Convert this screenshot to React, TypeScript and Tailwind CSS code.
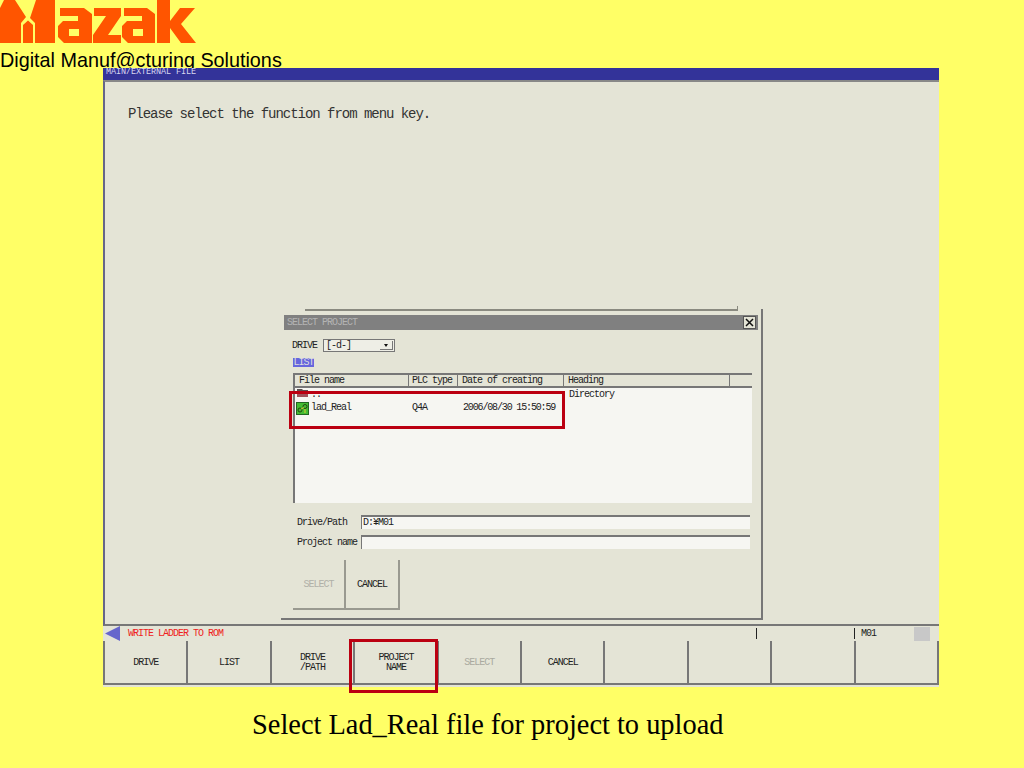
const MENU_KEYS = [
  ["DRIVE"],
  ["LIST"],
  ["DRIVE", "/PATH"],
  ["PROJECT", "NAME"],
  ["SELECT"],
  ["CANCEL"],
  [],
  [],
  [],
  [],
];

function MazakLogo() {
  return (
    <svg width="200" height="44" viewBox="0 0 200 44" className="block" fill="#ff5500">
      <path d="M0 43V8L4 0H15L26 17L21 23V43Z" />
      <path d="M23 43V25L28 20.5L33 25V43Z" />
      <path d="M35 43V23L30 18L36 0H55V43Z" />
      <path
        fillRule="evenodd"
        d="M60 8H84L92 14V43H64L58 37V26L63 21H78V16H60ZM69 29H79V36H69Z"
      />
      <path d="M94 8H121V16L108 35H121V43H93V35L106 16H94Z" />
      <path
        fillRule="evenodd"
        d="M124 8H147L155 14V43H128L122 37V26L127 21H142V16H124ZM133 29H143V36H133Z"
      />
      <path d="M157 0H170V21L180 8H195L181 24L196 43H181L170 28V43H157Z" />
    </svg>
  );
}

function FileTable() {
  return (
    <div className="ml-[12px] mt-[6px] h-[130px] w-[459px] border-l-2 border-[#777777] bg-[#f6f6f2] text-[#222222]">
      <div className="flex h-[15px] border-y-2 border-[#777777] bg-[#e4e4d6] leading-[11px]">
        <div className="w-[114px] border-r border-[#777777] pl-[4px]">File name</div>
        <div className="w-[49px] border-r border-[#777777] pl-[3px]">PLC type</div>
        <div className="w-[106px] border-r border-[#777777] pl-[4px]">Date of creating</div>
        <div className="w-[166px] border-r border-[#777777] pl-[4px]">Heading</div>
      </div>
      <div className="flex h-[12px] leading-[13px]">
        <div className="flex w-[114px] items-center gap-[2px] pl-[1px]">
          <svg width="13" height="8" viewBox="0 0 13 8" className="-mt-[3px]">
            <path d="M1 0H6L7 1H12V8H1Z" fill="#5a5050" />
            <rect x="1" y="4" width="11" height="4" fill="#a0525a" />
          </svg>
          <span>..</span>
        </div>
        <div className="w-[155px]" />
        <div className="pl-[5px]">Directory</div>
      </div>
      <div className="mt-[1px] flex h-[14px] leading-[14px]">
        <div className="flex w-[114px] items-center gap-[2px] pl-[1px]">
          <svg width="13" height="13" viewBox="0 0 13 13">
            <rect x="0.5" y="0.5" width="12" height="12" fill="#44bb33" stroke="#226622" />
            <circle cx="4" cy="8" r="2" fill="none" stroke="#224411" />
            <circle cx="9" cy="4.5" r="2" fill="none" stroke="#224411" />
            <path d="M5 7L8 5.5M9 7V11" stroke="#ddcc33" />
          </svg>
          <span>lad_Real</span>
        </div>
        <div className="w-[52px] pl-[3px]">Q4A</div>
        <div className="w-[103px] pl-[2px] tracking-[-1.15px]">2006/08/30 15:50:59</div>
      </div>
    </div>
  );
}

function SelectProjectDialog() {
  return (
    <div className="absolute left-[176px] top-[227px] h-[311px] w-[482px] border-r-2 border-b-2 border-[#777777] bg-[#e4e4d6] text-[#222222]">
      <div className="ml-[24px] mr-[24px] flex h-[1px] items-start justify-between border-t-2 border-[#8a8a80]">
        <span className="-mt-[5px] -mr-[1px] ml-auto h-[5px] w-[1px] bg-[#8a8a80]" />
      </div>
      <div className="mx-[3px] mt-[4px] flex h-[15px] items-center justify-between bg-[#808080] pl-[3px] pr-[2px] text-[#b4b4b4]">
        <span>SELECT PROJECT</span>
        <span className="flex h-[13px] w-[13px] items-center justify-center border border-[#555555] bg-[#e4e4d6]">
          <svg width="9" height="9" viewBox="0 0 9 9" stroke="#111111" strokeWidth="1.5">
            <path d="M1 1L8 8M8 1L1 8" />
          </svg>
        </span>
      </div>
      <div className="mt-[9px] flex h-[13px] items-center pl-[11px]">
        <span className="w-[31px]">DRIVE</span>
        <div className="flex h-[13px] w-[72px] items-center justify-between border border-[#777777] bg-[#eeeee6] pl-[2px] pr-[1px]">
          <span>[-d-]</span>
          <span className="flex h-[9px] w-[13px] items-center justify-center border-r border-b border-[#777777]">
            <span className="h-0 w-0 border-x-[2px] border-t-[3px] border-x-transparent border-t-[#111111]" />
          </span>
        </div>
      </div>
      <div className="ml-[12px] mt-[6px] h-[9px] w-[21px] bg-[#6666dd] text-center leading-[9px] text-[#dddddd]">LIST</div>
      <FileTable />
      <div className="mt-[12px] flex h-[14px] items-center pl-[16px]">
        <span className="w-[64px]">Drive/Path</span>
        <div className="h-[14px] w-[389px] border-t-2 border-l border-[#777777] bg-[#f6f6f2] pl-[1px] leading-[11px]">D:¥M01</div>
      </div>
      <div className="mt-[6px] flex h-[14px] items-center pl-[16px]">
        <span className="w-[64px] whitespace-nowrap">Project name</span>
        <div className="h-[14px] w-[389px] border-t-2 border-l border-[#777777] bg-[#f6f6f2]" />
      </div>
      <div className="ml-[12px] mt-[11px] flex h-[50px]">
        <div className="flex w-[53px] items-center justify-center border-r-2 border-b-2 border-[#999990] text-[#b0b0a8]">SELECT</div>
        <div className="flex w-[54px] items-center justify-center border-r-2 border-b-2 border-[#999990]">CANCEL</div>
      </div>
    </div>
  );
}

export default function App() {
  return (
    <div className="relative flex h-[768px] w-[1024px] flex-col overflow-hidden bg-[#ffff66]">
      <header className="h-[68px]">
        <MazakLogo />
        <p className="mt-[7px] whitespace-nowrap font-['Liberation_Sans',sans-serif] text-[19.8px] leading-[18px] text-black">
          Digital Manuf@cturing Solutions
        </p>
      </header>

      <div className="relative ml-[103px] flex h-[619px] w-[836px] flex-col bg-[#e4e4d6] font-['Liberation_Mono',monospace] text-[10px] tracking-[-1px] text-[#222222]">
        <div className="h-[12px] overflow-hidden bg-[#333399] pl-[3px] text-[8.5px] leading-[8px] tracking-[-0.1px] text-[#d8d8f0]">
          MAIN/EXTERNAL FILE
        </div>
        <main className="relative h-[546px] border-t-2 border-b-2 border-l-2 border-t-[#888888] border-b-[#777777] border-l-[#666688]">
          <p className="pl-[23px] pt-[24px] text-[14px] leading-[16px] tracking-[-1.03px] text-[#333333]">
            Please select the function from menu key.
          </p>
          <SelectProjectDialog />
        </main>
        <div className="flex h-[15px] items-center">
          <svg width="17" height="15" viewBox="0 0 17 15" className="ml-[2px]">
            <path d="M0 7.5L15 0V15Z" fill="#6666cc" />
          </svg>
          <span className="ml-[6px] w-[628px] text-[#ee2222]">WRITE LADDER TO ROM</span>
          <span className="h-[11px] w-[98px] border-l border-[#222222]" />
          <span className="h-[11px] w-[60px] border-l border-[#222222] pl-[6px] leading-[11px]">M01</span>
          <span className="h-[14px] w-[16px] bg-[#c8c8c8]" />
        </div>
        <div className="grid h-[44px] grid-cols-10 border-b-2 border-l-2 border-[#777777]">
          {MENU_KEYS.map((lines, i) => (
            <div
              key={i}
              className={`flex flex-col items-center justify-center border-r-2 border-[#777777] pt-[1px] leading-[10px] ${
                i === 4 ? "text-[#aaaaa0]" : "text-[#222222]"
              }`}
            >
              {lines.map((line) => (
                <span key={line}>{line}</span>
              ))}
            </div>
          ))}
        </div>
      </div>

      <p className="mt-[22px] pl-[252px] font-['Liberation_Serif',serif] text-[28.4px] leading-[32px] text-black">
        Select Lad_Real file for project to upload
      </p>

      {/* red callouts drawn over the screen capture */}
      <div className="absolute left-[289px] top-[391px] h-[38px] w-[276px] border-[3px] border-[#bb0011]" />
      <div className="absolute left-[349px] top-[639px] h-[54px] w-[89px] border-[3px] border-[#bb0011]" />
    </div>
  );
}
